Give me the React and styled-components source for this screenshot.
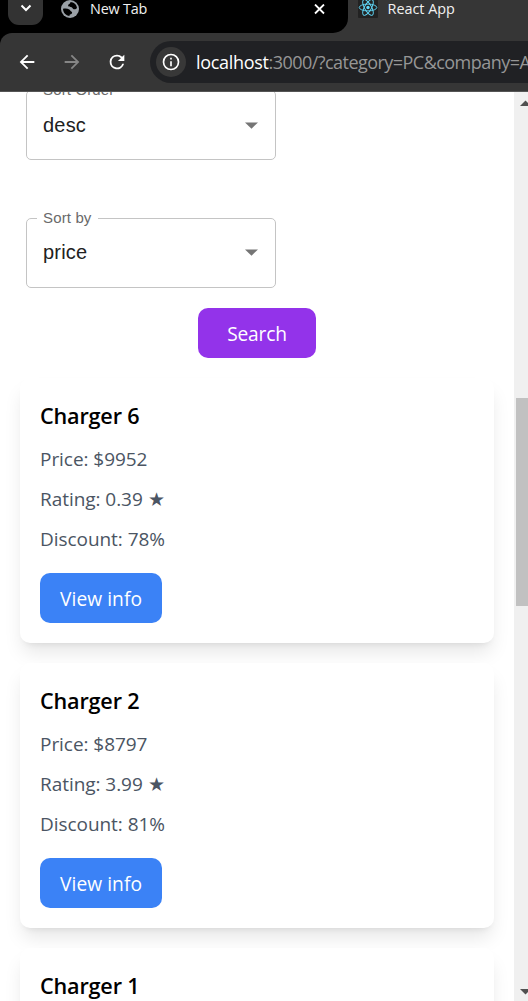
import React from "react";
import styled, { createGlobalStyle } from "styled-components";

const GlobalStyle = createGlobalStyle`
  * { box-sizing: border-box; }
  body { margin: 0; background: #fff; overflow: hidden; }
  svg { display: block; flex: none; }
`;

const uiFont = `"Open Sans", "Noto Sans", sans-serif`;
const muiFont = `"Liberation Sans", Arial, sans-serif`;

const Window = styled.div`
  width: 528px;
  height: 1001px;
  display: flex;
  flex-direction: column;
  overflow: hidden;
  font-family: ${uiFont};
`;

const TabStrip = styled.div`
  height: 33px;
  display: flex;
  background: #363636;
  color: #f1f1f1;
`;

const DarkTabs = styled.div`
  width: 348px;
  height: 33px;
  padding-left: 8px;
  display: flex;
  background: #000;
  border-bottom-right-radius: 15px;
`;

const TabSearch = styled.button`
  width: 35px;
  height: 25px;
  padding: 0;
  border: 0;
  border-radius: 0 0 11px 11px;
  background: #333;
  color: #fff;
  display: flex;
  justify-content: center;
`;

const Tab = styled.div`
  flex: 1;
  height: 18px;
  display: flex;
  align-items: center;
  padding: 0 ${(p) => p.$right || 0}px 0 ${(p) => p.$left}px;
`;

const TabTitle = styled.span`
  flex: 1;
  margin-left: ${(p) => p.$gap}px;
  font-size: 14.4px;
  line-height: 18px;
  letter-spacing: ${(p) => p.$spacing}px;
  white-space: nowrap;
`;

const ToolbarBack = styled.div`
  height: 59px;
  flex: none;
  background: #000;
`;

const Toolbar = styled.div`
  height: 59px;
  padding: 8px 0 8px 16px;
  display: flex;
  align-items: center;
  background: #363636;
  border-bottom: 1px solid #555;
  border-top-left-radius: 12px;
`;

const NavButtons = styled.div`
  width: 134px;
  display: flex;
  gap: 23px;
  flex: none;
`;

const AddressBar = styled.div`
  flex: 1;
  min-width: 0;
  height: 42px;
  padding-left: 6px;
  display: flex;
  align-items: center;
  border-radius: 21px 0 0 21px;
  background: #202124;
  overflow: hidden;
`;

const SiteInfo = styled.span`
  width: 30px;
  height: 30px;
  flex: none;
  display: flex;
  align-items: center;
  justify-content: center;
  border-radius: 50%;
  background: #383838;
  color: #fff;
`;

const Url = styled.span`
  margin-left: 10px;
  font-size: 18px;
  line-height: 24px;
  letter-spacing: -0.54px;
  white-space: nowrap;
  color: #969696;
`;

const Host = styled.span`
  color: #fff;
  letter-spacing: -0.32px;
`;

const Viewport = styled.div`
  flex: 1;
  min-height: 0;
  display: flex;
  overflow: hidden;
`;

const Page = styled.main`
  width: 514px;
  flex: none;
  overflow: hidden;
`;

const Filters = styled.section`
  margin-top: -12px;
  padding-left: 26px;
  display: flex;
  flex-direction: column;
  gap: 48px;
`;

const Field = styled.fieldset`
  width: 250px;
  height: 80px;
  margin: 0;
  padding: 0 17px 0 10px;
  border: 1px solid #c4c4c4;
  border-radius: 5px;
  font-family: ${muiFont};
`;

const FieldLabel = styled.legend`
  padding: 0 6px;
  font-size: 15px;
  line-height: 20px;
  letter-spacing: 0.14px;
  color: #6a6a6a;
`;

const FieldValue = styled.div`
  height: ${(p) => p.$height}px;
  padding-left: 6px;
  display: flex;
  align-items: center;
  justify-content: space-between;
  font-size: 20px;
  letter-spacing: 0.19px;
  color: #212121;
`;

const Actions = styled.div`
  padding: 20px 0;
  display: flex;
  justify-content: center;
`;

const Button = styled.button`
  width: ${(p) => p.$width}px;
  height: 50px;
  padding: 1px 0 0;
  border: 0;
  border-radius: 10px;
  background: ${(p) => p.$color};
  color: #fff;
  font-family: ${uiFont};
  font-size: 19.2px;
  letter-spacing: ${(p) => p.$spacing}px;
  white-space: nowrap;
`;

const CardList = styled.div`
  padding: 0 20px;
  display: flex;
  flex-direction: column;
  gap: 20px;
`;

const Card = styled.article`
  height: 265px;
  padding: 20px;
  border-radius: 10px;
  background: #fff;
  box-shadow: 0 12.5px 18.75px -3.75px rgba(0, 0, 0, 0.1),
    0 5px 7.5px -5px rgba(0, 0, 0, 0.1);
`;

const CardTitle = styled.h2`
  margin: 0 0 11px;
  font-size: 21.6px;
  font-weight: 600;
  line-height: 35px;
  letter-spacing: -0.17px;
  color: #000;
`;

const Detail = styled.p`
  margin: 0 0 10px;
  font-size: 19px;
  line-height: 30px;
  letter-spacing: -0.05px;
  color: #4b5563;
`;

const CardAction = styled.div`
  padding-top: 9px;
`;

const Scrollbar = styled.div`
  width: 14px;
  padding: 8px 0 6px 2px;
  display: flex;
  flex-direction: column;
  background: #f0f0f0;
`;

const Track = styled.div`
  flex: 1;
  padding-top: 292px;
`;

const Thumb = styled.div`
  height: 208px;
  background: #c1c1c1;
`;

const Icon = ({ size, d, color = "#fff" }) => (
  <svg width={size} height={size} viewBox="0 0 24 24" fill={color}>
    <path d={d} />
  </svg>
);

const paths = {
  back: "M20 11H7.83l5.59-5.59L12 4l-8 8 8 8 1.41-1.41L7.83 13H20v-2z",
  forward: "M12 4l-1.41 1.41L16.17 11H4v2h12.17l-5.58 5.59L12 20l8-8z",
  reload:
    "M17.65 6.35A7.96 7.96 0 0 0 12 4a8 8 0 1 0 7.73 10h-2.08A6 6 0 1 1 12 6c1.66 0 3.14.69 4.22 1.78L13 11h7V4z",
  info: "M11 7h2v2h-2zm0 4h2v6h-2zm1-9a10 10 0 1 0 0 20 10 10 0 0 0 0-20zm0 18a8 8 0 1 1 0-16 8 8 0 0 1 0 16z",
};

const GlobeIcon = () => (
  <svg width="18" height="18" viewBox="0 0 18 18">
    <circle cx="9" cy="9" r="9" fill="#9aa0a6" />
    <path
      d="M9.5 2.1C12.8 2.2 15.6 4.7 16 8c-.8 1.2-2.2 1.5-3.4 1.2-1-.3-1-1.6-2-2-1.1-.4-2.4-.1-3.2-.9-.7-.8-.1-1.8.7-2.2.8-.4 1.3-1 1.4-2z"
      fill="#000"
    />
    <path
      d="M2 8.8c2.2-.5 4.7-.4 6.3.6 1 .6.9 1.6 1.9 2 .9.3 1.2 1.2.6 2-.5.7-1.7.6-2.1 1.4-.2.4-.2.8-.2 1.2C4.9 15.7 2.1 12.7 2 8.800z"
      fill="#000"
    />
  </svg>
);

const ReactLogo = () => (
  <svg width="20" height="20" viewBox="0 0 20 20">
    <rect y="-1" width="20" height="20" rx="1" fill="#222" />
    <g fill="none" stroke="#61dafb" strokeWidth="0.9">
      <ellipse cx="10" cy="8.5" rx="8.8" ry="3.4" />
      <ellipse cx="10" cy="8.5" rx="8.8" ry="3.4" transform="rotate(60 10 8.5)" />
      <ellipse cx="10" cy="8.5" rx="8.8" ry="3.4" transform="rotate(120 10 8.5)" />
    </g>
    <circle cx="10" cy="8.5" r="1.7" fill="#61dafb" />
  </svg>
);

const SelectField = ({ label, value, rowHeight }) => (
  <Field>
    <FieldLabel>{label}</FieldLabel>
    <FieldValue $height={rowHeight}>
      {value}
      <svg width="13" height="7" viewBox="0 0 13 7">
        <path d="M0 0.4h13L6.5 6.7z" fill="#757575" />
      </svg>
    </FieldValue>
  </Field>
);

const products = [
  { name: "Charger 6", price: 9952, rating: "0.39", discount: 78 },
  { name: "Charger 2", price: 8797, rating: "3.99", discount: 81 },
  { name: "Charger 1" },
];

const ProductCard = ({ name, price, rating, discount }) => (
  <Card>
    <CardTitle>{name}</CardTitle>
    {price && (
      <>
        <Detail>Price: ${price}</Detail>
        <Detail>Rating: {rating} ★</Detail>
        <Detail>Discount: {discount}%</Detail>
        <CardAction>
          <Button $width={122} $color="#3b82f6" $spacing={0.05}>
            View info
          </Button>
        </CardAction>
      </>
    )}
  </Card>
);

export default function App() {
  return (
    <Window>
      <GlobalStyle />
      <TabStrip>
        <DarkTabs>
          <TabSearch>
            <svg width="12" height="14" viewBox="0 0 12 14">
              <path d="M1.5 5.5L6 10l4.5-4.5" fill="none" stroke="#fff" strokeWidth="2" />
            </svg>
          </TabSearch>
          <Tab $left={18} $right={23}>
            <GlobeIcon />
            <TabTitle $gap={11} $spacing={-0.2}>New Tab</TabTitle>
            <svg width="11" height="11" viewBox="0 0 11 11">
              <path d="M1 0.5l9 9M10 0.5l-9 9" stroke="#fff" strokeWidth="1.8" />
            </svg>
          </Tab>
        </DarkTabs>
        <Tab $left={10}>
          <ReactLogo />
          <TabTitle $gap={9.5} $spacing={0}>React App</TabTitle>
        </Tab>
      </TabStrip>
      <ToolbarBack>
        <Toolbar>
          <NavButtons>
            <Icon size={22} d={paths.back} />
            <Icon size={22} d={paths.forward} color="#868686" />
            <Icon size={22} d={paths.reload} />
          </NavButtons>
          <AddressBar>
            <SiteInfo>
              <Icon size={20} d={paths.info} />
            </SiteInfo>
            <Url>
              <Host>localhost</Host>:3000/?category=PC&amp;company=A
            </Url>
          </AddressBar>
        </Toolbar>
      </ToolbarBack>
      <Viewport>
        <Page>
          <Filters>
            <SelectField label="Sort Order" value="desc" rowHeight={50} />
            <SelectField label="Sort by" value="price" rowHeight={49} />
          </Filters>
          <Actions>
            <Button $width={118} $color="#9333ea" $spacing={-0.2}>
              Search
            </Button>
          </Actions>
          <CardList>
            {products.map((p) => (
              <ProductCard key={p.name} {...p} />
            ))}
          </CardList>
        </Page>
        <Scrollbar>
          <svg width="12" height="6" viewBox="0 0 12 6">
            <path d="M4 6l5.5-5.5L15 6z" fill="#505050" />
          </svg>
          <Track>
            <Thumb />
          </Track>
          <svg width="12" height="6" viewBox="0 0 12 6">
            <path d="M4 0l5.5 5.5L15 0z" fill="#505050" />
          </svg>
        </Scrollbar>
      </Viewport>
    </Window>
  );
}
